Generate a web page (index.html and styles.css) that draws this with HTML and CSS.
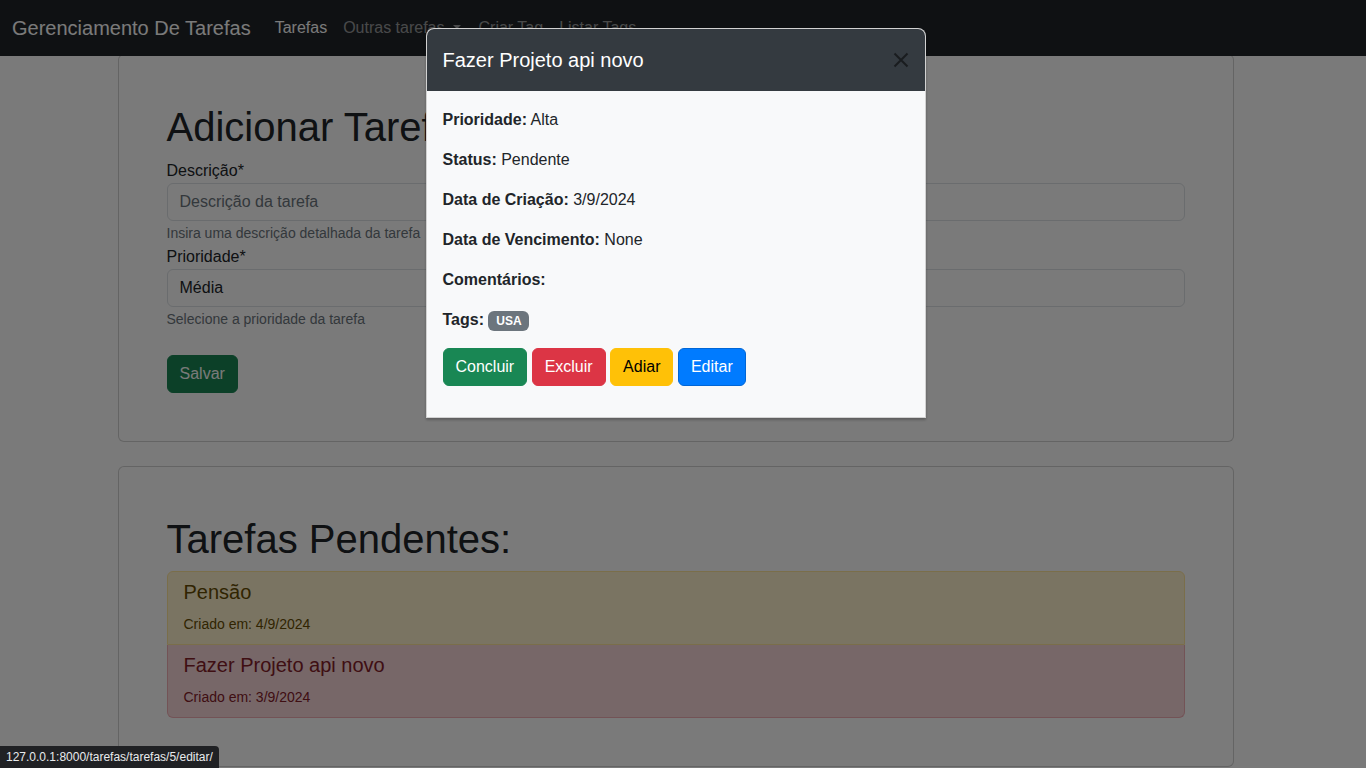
FILE: index.html
```html
<!DOCTYPE html>
<html lang="pt-BR">
<head>
<meta charset="utf-8">
<title>Gerenciamento De Tarefas</title>
<link rel="stylesheet" href="styles.css">
</head>
<body>
<nav class="navbar">
  <a class="brand" href="#">Gerenciamento De Tarefas</a>
  <ul class="nav">
    <li><a class="nav-link active" href="#">Tarefas</a></li>
    <li><a class="nav-link dropdown-toggle" href="#">Outras tarefas</a></li>
    <li><a class="nav-link" href="#">Criar Tag</a></li>
    <li><a class="nav-link" href="#">Listar Tags</a></li>
  </ul>
</nav>

<main class="container">
  <section class="card">
    <div class="card-body">
      <h1>Adicionar Tarefa</h1>
      <form class="task-form">
        <label class="form-label">Descrição*</label>
        <input class="form-control" type="text" placeholder="Descrição da tarefa">
        <small class="form-text">Insira uma descrição detalhada da tarefa</small>
        <label class="form-label">Prioridade*</label>
        <select class="form-control">
          <option>Média</option>
        </select>
        <small class="form-text">Selecione a prioridade da tarefa</small>
        <div class="form-actions">
          <button type="button" class="btn btn-success">Salvar</button>
        </div>
      </form>
    </div>
  </section>

  <section class="card card-list">
    <div class="card-body">
      <h1>Tarefas Pendentes:</h1>
      <div class="list-group">
        <a class="list-item item-warning" href="#">
          <h5>Pensão</h5>
          <p><small>Criado em: 4/9/2024</small></p>
        </a>
        <a class="list-item item-danger" href="#">
          <h5>Fazer Projeto api novo</h5>
          <p><small>Criado em: 3/9/2024</small></p>
        </a>
      </div>
    </div>
  </section>
</main>

<div class="backdrop"></div>

<div class="modal">
  <div class="modal-dialog">
    <div class="modal-content">
      <div class="modal-header">
        <h5 class="modal-title">Fazer Projeto api novo</h5>
        <button type="button" class="btn-close" aria-label="Fechar">
          <svg width="16" height="16" viewBox="0 0 16 16"><path d="M1.5 1.5 L14.5 14.5 M14.5 1.5 L1.5 14.5" stroke="#000" stroke-width="2" fill="none"/></svg>
        </button>
      </div>
      <div class="modal-body">
        <p><strong>Prioridade:</strong> Alta</p>
        <p><strong>Status:</strong> Pendente</p>
        <p><strong>Data de Criação:</strong> 3/9/2024</p>
        <p><strong>Data de Vencimento:</strong> None</p>
        <p><strong>Comentários:</strong> </p>
        <p><strong>Tags:</strong> <span class="badge">USA</span></p>
        <div class="modal-actions">
          <button type="button" class="btn btn-success">Concluir</button>
          <button type="button" class="btn btn-danger">Excluir</button>
          <button type="button" class="btn btn-warning">Adiar</button>
          <button type="button" class="btn btn-primary">Editar</button>
        </div>
      </div>
    </div>
  </div>
</div>

<div class="status-bubble">127.0.0.1:8000/tarefas/tarefas/5/editar/</div>
</body>
</html>
```

FILE: styles.css
```css
* {
  box-sizing: border-box;
}

html, body {
  margin: 0;
  height: 100%;
  overflow: hidden;
}

body {
  font-family: "Liberation Sans", Arial, sans-serif;
  font-size: 16px;
  line-height: 1.5;
  color: #212529;
  background: #fff;
  padding-right: 15px;
  padding-top: 54px;
}

a {
  text-decoration: none;
  color: inherit;
}

/* Navbar */
.navbar {
  position: fixed;
  top: 0;
  left: 0;
  right: 0;
  z-index: 1030;
  height: 56px;
  display: flex;
  align-items: center;
  padding: 8px 12px;
  background: #212529;
}

.brand {
  font-size: 20px;
  line-height: 30px;
  padding: 5px 0;
  margin-right: 16px;
  color: #fff;
}

.nav {
  display: flex;
  list-style: none;
  margin: 0;
  padding: 0;
}

.nav-link {
  display: block;
  padding: 8px;
  color: rgba(255, 255, 255, 0.55);
}

.nav-link.active {
  color: #fff;
}

.dropdown-toggle::after {
  content: "";
  display: inline-block;
  margin-left: 8px;
  margin-right: 2px;
  vertical-align: 0.255em;
  border-top: 0.3em solid;
  border-right: 0.3em solid transparent;
  border-left: 0.3em solid transparent;
}

/* Container & cards */
.container {
  width: 1140px;
  margin: 0 auto;
  padding: 0 12px;
}

.card {
  background: #fff;
  border: 1px solid rgba(0, 0, 0, 0.175);
  border-radius: 6px;
}

.card + .card {
  margin-top: 24px;
}

.card-body {
  padding: 48px;
}

h1 {
  font-size: 40px;
  font-weight: 400;
  line-height: 48px;
  margin: 0 0 8px;
}

.task-form {
  display: flex;
  flex-direction: column;
}

.form-label {
  display: block;
  line-height: 24px;
}

.form-control {
  display: block;
  width: 100%;
  height: 38px;
  padding: 6px 12px;
  font-family: inherit;
  font-size: 16px;
  line-height: 24px;
  color: #212529;
  background: #fff;
  border: 1px solid #dee2e6;
  border-radius: 6px;
  appearance: none;
  -webkit-appearance: none;
  outline: none;
}

.form-control::placeholder {
  color: #6c757d;
}

.form-text {
  display: block;
  font-size: 14px;
  line-height: 24px;
  color: #6c757d;
}

.form-actions {
  margin-top: 24px;
}

/* Buttons */
.btn {
  display: inline-block;
  font-family: inherit;
  font-size: 16px;
  line-height: 24px;
  padding: 6px 12px;
  border: 1px solid transparent;
  border-radius: 6px;
  cursor: pointer;
  vertical-align: middle;
}

.btn-success {
  background: #198754;
  border-color: #198754;
  color: #fff;
}

.btn-danger {
  background: #dc3545;
  border-color: #dc3545;
  color: #fff;
}

.btn-warning {
  background: #ffc107;
  border-color: #ffc107;
  color: #000;
}

.btn-primary {
  background: #007bff;
  border-color: #0066d6;
  color: #fff;
}

/* List group */
.list-group {
  display: flex;
  flex-direction: column;
  border-radius: 6px;
}

.list-item {
  display: block;
  padding: 8px 16px;
  border: 1px solid rgba(0, 0, 0, 0.175);
}

.list-item + .list-item {
  border-top-width: 0;
}

.list-item:first-child {
  border-radius: 6px 6px 0 0;
}

.list-item:last-child {
  border-radius: 0 0 6px 6px;
}

.list-item h5 {
  font-size: 20px;
  font-weight: 400;
  line-height: 24px;
  margin: 0 0 8px;
}

.list-item p {
  margin: 0;
  line-height: 24px;
}

.list-item small {
  font-size: 14px;
}

.item-warning {
  background: #fff3cd;
  color: #664d03;
  border-color: #ffe69c;
}

.item-danger {
  background: #f8d7da;
  color: #842029;
  border-color: #f1aeb5;
}

/* Backdrop & modal */
.backdrop {
  position: fixed;
  inset: 0;
  z-index: 1050;
  background: rgba(0, 0, 0, 0.52);
}

.modal {
  position: fixed;
  inset: 0;
  z-index: 1055;
  padding-right: 15px;
}

.modal-dialog {
  width: 500px;
  margin: 28px auto 0;
}

.modal-content {
  background: #fff;
  border: 1px solid rgba(0, 0, 0, 0.175);
  border-radius: 8px 8px 0 0;
  box-shadow: 0 2px 3px rgba(0, 0, 0, 0.25);
}

.modal-header {
  display: flex;
  align-items: center;
  padding: 16px;
  background: #343a40;
  color: #fff;
  border-radius: 7px 7px 0 0;
}

.modal-title {
  margin: 0;
  font-size: 20px;
  font-weight: 400;
  line-height: 30px;
}

.btn-close {
  margin: -8px -8px -8px auto;
  width: 32px;
  height: 32px;
  padding: 8px;
  border: 0;
  background: transparent;
  opacity: 0.5;
  display: flex;
  align-items: center;
  justify-content: center;
  cursor: pointer;
}

.modal-body {
  padding: 17px 16px 16px;
  background: #f8f9fa;
}

.modal-body p {
  margin: 0 0 16px;
  line-height: 24px;
}

.modal-body strong {
  font-weight: 700;
}

.badge {
  display: inline-block;
  padding: 4.2px 7.8px;
  font-size: 12px;
  font-weight: 700;
  line-height: 1;
  color: #fff;
  background: #6c757d;
  border-radius: 6px;
  vertical-align: baseline;
}

.modal-actions {
  margin-bottom: 15px;
}

/* Browser status bubble */
.status-bubble {
  position: fixed;
  left: 0;
  bottom: 0;
  z-index: 2000;
  height: 22px;
  padding: 0 6px;
  font-size: 12px;
  line-height: 22px;
  color: #e8eaed;
  background: #202124;
  border-top-right-radius: 4px;
  white-space: nowrap;
}
```
